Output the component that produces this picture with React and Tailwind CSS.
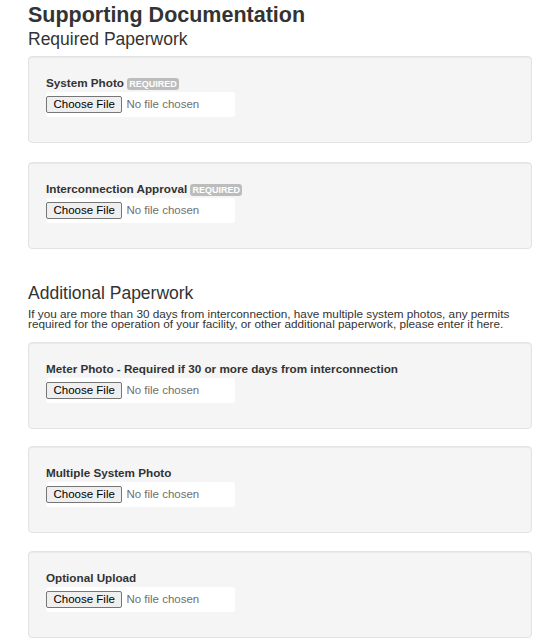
import React from "react";

function Badge() {
  return (
    <span className="inline-block rounded-[3px] bg-[#bcbcbc] px-[2px] text-[9px] font-bold leading-[12px] text-white">
      REQUIRED
    </span>
  );
}

function FileField() {
  return (
    <div className="mt-[1.5px] flex h-[25px] w-[189px] items-center rounded-[3px] bg-white">
      <span className="flex h-[17.5px] items-center rounded-[2px] border border-[#767676] bg-[#efefef] px-[6.5px] text-[11.5px] text-black">
        Choose File
      </span>
      <span className="ml-[4px] text-[11.5px] text-[#6f6f6f]">No file chosen</span>
    </div>
  );
}

function Card({ label, required, gap }) {
  return (
    <div
      className={`rounded-[4px] border border-[#e3e3e3] bg-[#f5f5f5] px-[17px] pb-[25px] pt-[16.5px] shadow-[inset_0_1px_1px_rgba(0,0,0,0.05)] ${gap}`}
    >
      <div className="text-[11.7px] font-bold leading-[17px] text-[#333]">
        {label}
        {required ? (
          <>
            {" "}
            <Badge />
          </>
        ) : null}
      </div>
      <FileField />
    </div>
  );
}

export default function App() {
  return (
    <div className="min-h-[640px] bg-white pl-[28px] pr-[1px] font-['Liberation_Sans',Arial,sans-serif] text-[#333]">
      <h1 className="mt-[3px] text-[21.5px] font-bold leading-[24px]">Supporting Documentation</h1>
      <h2 className="mt-[1.5px] text-[17.5px] font-normal leading-[20px]">Required Paperwork</h2>
      <div className="mt-[7.5px]">
        <Card label="System Photo" required gap="mb-[19px]" />
        <Card label="Interconnection Approval" required gap="" />
      </div>
      <h2 className="mt-[33.9px] text-[17.5px] font-normal leading-[20px]">Additional Paperwork</h2>
      <p className="mt-[5.7px] text-[11.75px] leading-[10.7px]">
        If you are more than 30 days from interconnection, have multiple system photos, any permits
        required for the operation of your facility, or other additional paperwork, please enter it here.
      </p>
      <div className="mt-[12.2px]">
        <Card label="Meter Photo - Required if 30 or more days from interconnection" gap="mb-[17px]" />
        <Card label="Multiple System Photo" gap="mb-[18px]" />
        <Card label="Optional Upload" gap="" />
      </div>
    </div>
  );
}
